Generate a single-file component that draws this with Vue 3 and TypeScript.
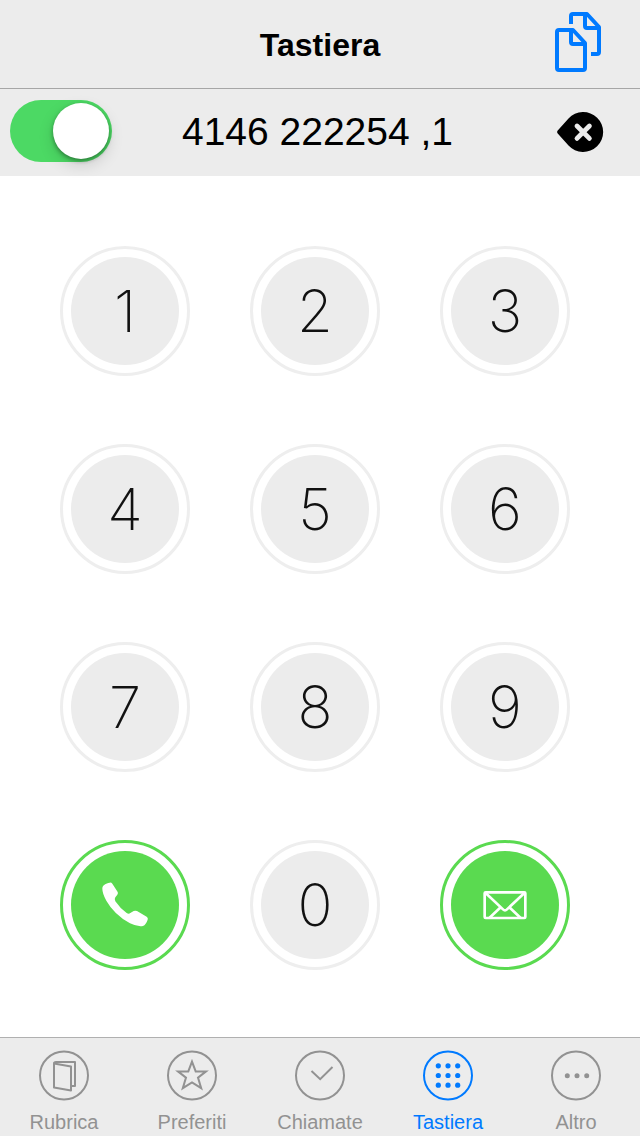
<script setup lang="ts">
import { ref } from 'vue'

const title = 'Tastiera'
const enabled = ref(true)
const phoneNumber = ref('4146 222254 ,1')
const digits = ['1', '2', '3', '4', '5', '6', '7', '8', '9']

const tabs = [
  { id: 'contacts', label: 'Rubrica' },
  { id: 'favorites', label: 'Preferiti' },
  { id: 'recents', label: 'Chiamate' },
  { id: 'keypad', label: 'Tastiera' },
  { id: 'more', label: 'Altro' },
]
const activeTab = ref('keypad')

function press(digit: string): void {
  phoneNumber.value += digit
}

function removeLast(): void {
  phoneNumber.value = phoneNumber.value.slice(0, -1)
}
</script>

<template>
  <div class="screen">
    <header class="navbar">
      <h1 class="title">{{ title }}</h1>
      <button class="icon-button copy" type="button" aria-label="Copia">
        <svg width="50" height="64" viewBox="0 0 50 64" fill="none" stroke="currentColor" stroke-width="4" stroke-linejoin="round">
          <path d="M18 14V6Q18 4 20 4H34L46 17V42Q46 44 44 44H38" />
          <path d="M32 4V16Q32 18 34 18H46" />
          <path d="M6 20H20L32 33V58Q32 60 30 60H6Q4 60 4 58V22Q4 20 6 20Z" />
          <path d="M18 20V32Q18 34 20 34H32" />
        </svg>
      </button>
    </header>

    <section class="number-bar">
      <input v-model="enabled" class="switch" type="checkbox" role="switch" aria-label="Attiva" />
      <input v-model="phoneNumber" class="number" type="tel" aria-label="Numero" />
      <button class="icon-button delete" type="button" aria-label="Cancella" @click="removeLast">
        <svg width="46" height="40" viewBox="0 0 46 40">
          <path d="M0.5 18.8L11.5 6.4A20 20 0 1 1 11.5 33.6L0.5 21.2Q-0.4 20 0.5 18.8Z" fill="#000" />
          <path d="M20 14L32.4 26.4M32.4 14L20 26.4" stroke="#ececec" stroke-width="4.8" stroke-linecap="round" />
        </svg>
      </button>
    </section>

    <main class="keypad">
      <button v-for="digit in digits" :key="digit" class="key" type="button" @click="press(digit)">
        <span class="face">{{ digit }}</span>
      </button>
      <button class="key action" type="button" aria-label="Chiama">
        <span class="face">
          <svg width="50" height="50" viewBox="150 150 150 150" fill="#fff">
            <path d="M157 176C156 167 168 159 179 158Q184 157 187 161L203 186Q205 190 202 194L196 202Q192 208 196 214Q210 235 230 249Q236 253 241 249L251 243Q256 241 261 243L290 260Q295 263 293 269Q288 284 279 288Q262 291 240 280Q192 253 169 212Q157 190 157 176Z" />
          </svg>
        </span>
      </button>
      <button class="key" type="button" @click="press('0')">
        <span class="face">0</span>
      </button>
      <button class="key action" type="button" aria-label="Messaggio">
        <span class="face">
          <svg width="50" height="50" viewBox="150 150 150 150" fill="none" stroke="#fff" stroke-width="8">
            <rect x="164" y="187" width="122" height="77" rx="3" />
            <path d="M166 188L219 238Q225 244 231 238L284 188M178 264L212 232M272 264L238 232" />
          </svg>
        </span>
      </button>
    </main>

    <nav class="tabbar">
      <button
        v-for="tab in tabs"
        :key="tab.id"
        class="tab"
        :class="{ active: tab.id === activeTab }"
        type="button"
        @click="activeTab = tab.id"
      >
        <svg width="50" height="50" viewBox="0 0 50 50" fill="none" stroke="currentColor" stroke-width="2">
          <circle cx="25" cy="25.5" r="24" />
          <g v-if="tab.id === 'contacts'" stroke-linejoin="round">
            <path d="M15 13.5L32 16.5V40.5L15 37.5Z" />
            <path d="M15 13.5Q15 12 17 12H36V36H32" />
          </g>
          <path
            v-else-if="tab.id === 'favorites'"
            d="M25 11.6L28.7 21.4H39L31 27.6L34.2 38.2L25 32.4L15.8 38.2L19 27.6L11 21.4H21.3Z"
          />
          <path v-else-if="tab.id === 'recents'" d="M16.5 21L25.2 29.2L37.5 17" />
          <g v-else-if="tab.id === 'keypad'" fill="currentColor" stroke="none">
            <template v-for="cy in [15.8, 25.5, 35.2]" :key="cy">
              <circle v-for="cx in [15.3, 25, 34.7]" :key="cx" :cx="cx" :cy="cy" r="2.6" />
            </template>
          </g>
          <g v-else fill="currentColor" stroke="none">
            <circle v-for="cx in [16.3, 26, 35.7]" :key="cx" :cx="cx" cy="25.8" r="2.5" />
          </g>
        </svg>
        <span class="tab-label">{{ tab.label }}</span>
      </button>
    </nav>
  </div>
</template>

<style>
body {
  margin: 0;
  background: #fff;
}
</style>

<style scoped>
.screen {
  display: flex;
  flex-direction: column;
  min-height: 100vh;
  font-family: "Liberation Sans", Arial, sans-serif;
  color: #000;
}

button,
input {
  margin: 0;
  padding: 0;
  border: 0;
  background: none;
  color: inherit;
  font: inherit;
}

button {
  cursor: pointer;
}

svg {
  display: block;
  overflow: visible;
}

.navbar {
  display: grid;
  grid-template-columns: 1fr auto 1fr;
  align-items: center;
  height: 88px;
  background: #ececec;
  border-bottom: 1px solid #a6a6a6;
}

.title {
  grid-column: 2;
  margin: 0;
  padding-top: 2px;
  font-size: 32px;
  font-weight: 700;
}

.icon-button {
  display: flex;
  align-items: center;
  justify-content: center;
}

.copy {
  justify-self: end;
  margin-right: 37px;
  padding-bottom: 4px;
  color: #007aff;
}

.number-bar {
  display: flex;
  align-items: flex-start;
  padding: 11px 37px 12px 10px;
  background: #ececec;
}

.switch {
  appearance: none;
  display: flex;
  flex: none;
  box-sizing: border-box;
  width: 102px;
  height: 62px;
  padding: 3px;
  border-radius: 31px;
  background: #c8c8c8;
  cursor: pointer;
}

.switch::before {
  content: "";
  width: 56px;
  height: 56px;
  border-radius: 50%;
  background: #fff;
  box-shadow: 0 6px 16px rgba(0, 0, 0, 0.14), 0 2px 4px rgba(0, 0, 0, 0.36);
}

.switch:checked {
  justify-content: flex-end;
  background: #4cd964;
}

.number {
  flex: 1;
  min-width: 0;
  height: 64px;
  margin-left: 20px;
  margin-right: 54px;
  font-size: 39px;
  text-align: center;
}

.delete {
  height: 64px;
}

.keypad {
  flex: 1;
  display: grid;
  grid-template-columns: repeat(3, 130px);
  justify-content: space-between;
  align-content: space-between;
  row-gap: 24px;
  padding: 70px 70px 67px 60px;
}

.key {
  box-sizing: border-box;
  display: flex;
  align-items: center;
  justify-content: center;
  width: 130px;
  height: 130px;
  border: 3px solid #eee;
  border-radius: 50%;
}

.face {
  display: flex;
  align-items: center;
  justify-content: center;
  width: 108px;
  height: 108px;
  border-radius: 50%;
  background: #ececec;
  color: #111;
  font-family: Inter, Roboto, sans-serif;
  font-size: 58px;
  font-weight: 200;
}

.action {
  border-color: #5ada50;
}

.action .face {
  background: #5ada50;
}

.tabbar {
  display: flex;
  background: #ececec;
  border-top: 1px solid #b0b0b0;
}

.tab {
  flex: 1;
  display: flex;
  flex-direction: column;
  align-items: center;
  gap: 10px;
  padding: 12px 0 2px;
  color: #929292;
}

.tab.active {
  color: #007aff;
}

.tab-label {
  font-size: 20px;
  line-height: 24px;
}
</style>
